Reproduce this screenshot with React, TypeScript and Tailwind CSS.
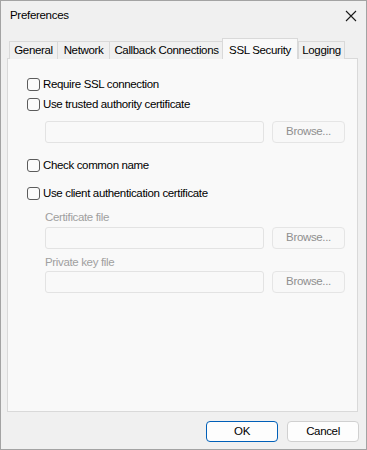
import React from "react";

const font = { fontFamily: '"Liberation Sans", Arial, sans-serif' };

function Checkbox({ label }: { label: string }) {
  return (
    <div className="flex h-[20px] items-center">
      <div className="h-[13px] w-[13px] rounded-[3px] border border-[#5c5c5c] bg-[#fbfbfb]" />
      <span className="ml-[3px] whitespace-nowrap text-[11.5px] leading-[16px] tracking-[-0.35px] text-black">{label}</span>
    </div>
  );
}

function FileRow() {
  return (
    <div className="flex items-center">
      <div className="h-[22px] w-[219px] rounded-[3px] border border-[#e3e3e3] bg-[#f9f9f9]" />
      <div className="ml-[8px] flex h-[22px] w-[73px] items-center justify-center rounded-[4px] border border-[#e5e5e5] bg-[#f8f8f8] text-[11.5px] tracking-[-0.35px] text-[#8f8f8f]">
        Browse...
      </div>
    </div>
  );
}

const tabs = [
  { name: "General", w: 48 },
  { name: "Network", w: 52 },
  { name: "Callback Connections", w: 114 },
  { name: "SSL Security", w: 76, active: true },
  { name: "Logging", w: 47 },
];

export default function App() {
  return (
    <div style={font} className="flex h-[450px] w-[367px] flex-col border border-[#a3a3a3] bg-[#f0f0f0]">
      <div className="flex h-[30px] items-center justify-between pl-[9px] pr-[9px]">
        <span className="text-[11.5px] tracking-[-0.3px] text-black">Preferences</span>
        <svg width="12" height="12" viewBox="0 0 12 12">
          <path d="M1 1L11 11M11 1L1 11" stroke="#1a1a1a" strokeWidth="1.1" fill="none" />
        </svg>
      </div>
      <div className="flex flex-col pl-[6px] pt-[7px]">
        <div className="relative z-10 ml-[2px] flex h-[21px] items-end">
          {tabs.map((t) =>
            t.active ? (
              <div
                key={t.name}
                style={{ width: t.w }}
                className="-ml-px flex h-[21px] items-start justify-center whitespace-nowrap border border-b-0 border-[#d9d9d9] bg-[#f9f9f9] pt-[3px] text-[11.5px] tracking-[-0.35px] text-black"
              >
                {t.name}
              </div>
            ) : (
              <div
                key={t.name}
                style={{ width: t.w }}
                className="flex h-[18px] items-center justify-center whitespace-nowrap border border-b-0 border-r-0 border-[#d9d9d9] bg-[#f0f0f0] pt-[1px] text-[11.5px] tracking-[-0.35px] text-black last:border-r"
              >
                {t.name}
              </div>
            )
          )}
        </div>
        <div className="-mt-px flex h-[354px] w-[351px] flex-col border border-[#d9d9d9] bg-[#f9f9f9] pl-[19px] pt-[15px]">
          <Checkbox label="Require SSL connection" />
          <Checkbox label="Use trusted authority certificate" />
          <div className="ml-[18px] mt-[7px]">
            <FileRow />
          </div>
          <div className="mt-[12px]">
            <Checkbox label="Check common name" />
          </div>
          <div className="mt-[8px]">
            <Checkbox label="Use client authentication certificate" />
          </div>
          <div className="ml-[18px] mt-[6px] flex flex-col">
            <span className="h-[16px] text-[11.5px] leading-[16px] tracking-[-0.35px] text-[#a0a0a0]">Certificate file</span>
            <div className="mt-[2px]">
              <FileRow />
            </div>
            <span className="mt-[5px] h-[16px] text-[11.5px] leading-[16px] tracking-[-0.35px] text-[#a0a0a0]">Private key file</span>
            <div className="mt-[1px]">
              <FileRow />
            </div>
          </div>
        </div>
      </div>
      <div className="mt-[9px] flex justify-end gap-[9px] pr-[7px]">
        <div className="flex h-[21px] w-[72px] items-center justify-center rounded-[4px] border border-[#005fb8] bg-[#fdfdfd] text-[11.5px] tracking-[-0.35px] text-black">
          OK
        </div>
        <div className="flex h-[21px] w-[72px] items-center justify-center rounded-[4px] border border-[#d0d0d0] bg-[#fdfdfd] text-[11.5px] tracking-[-0.35px] text-black">
          Cancel
        </div>
      </div>
    </div>
  );
}
